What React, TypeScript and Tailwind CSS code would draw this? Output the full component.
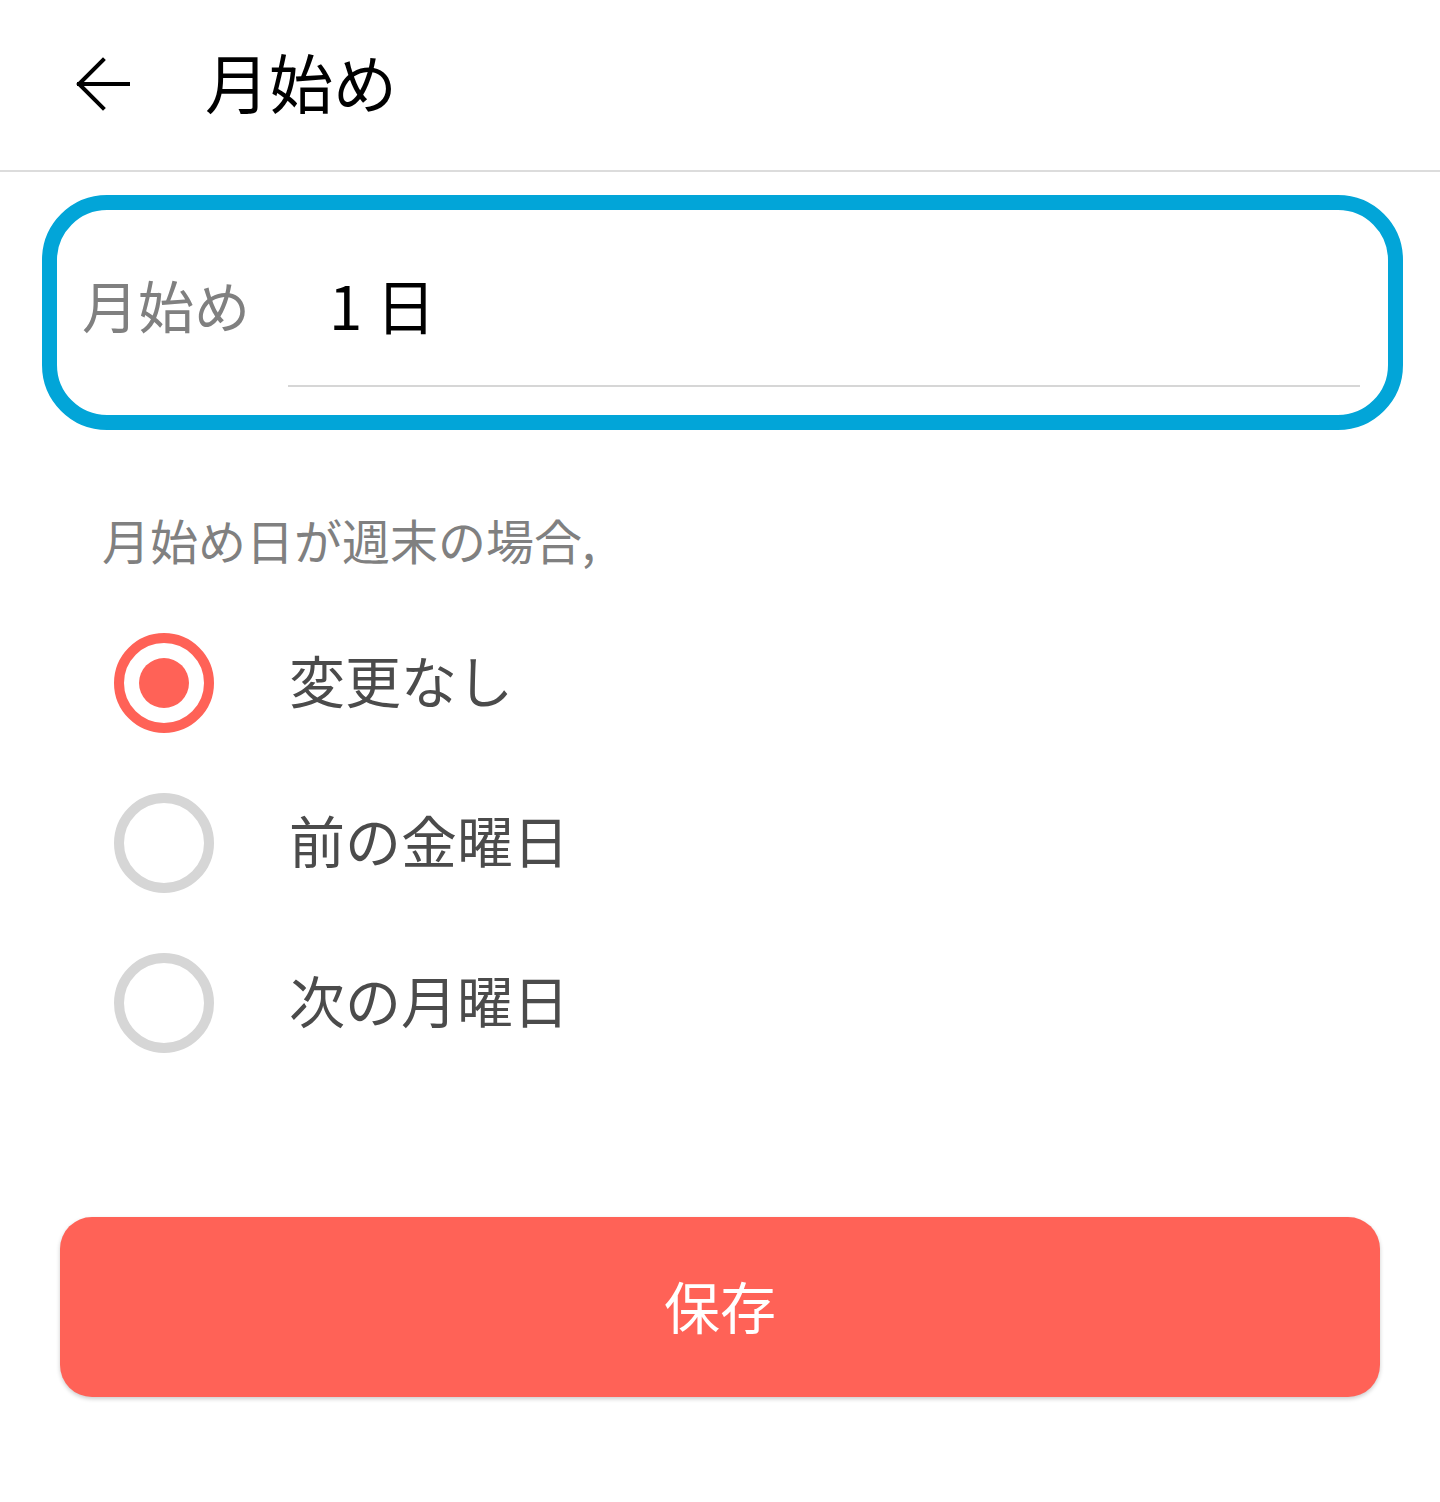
import * as React from "react";

const options = ["変更なし", "前の金曜日", "次の月曜日"];

function BackArrow() {
  return (
    <svg width="56" height="56" viewBox="0 0 56 56" fill="none" className="shrink-0">
      <path
        d="M54 27H5M29 3L5 27l24 24"
        stroke="#000"
        strokeWidth="4"
        strokeLinecap="square"
      />
    </svg>
  );
}

function Radio({ checked }: { checked: boolean }) {
  return (
    <span
      className={
        checked
          ? "flex h-[100px] w-[100px] shrink-0 items-center justify-center rounded-full border-[10px] border-[#ff6257]"
          : "flex h-[100px] w-[100px] shrink-0 items-center justify-center rounded-full border-[10px] border-[#d6d6d6]"
      }
    >
      {checked && <span className="h-[50px] w-[50px] rounded-full bg-[#ff6257]" />}
    </span>
  );
}

export default function App() {
  const [selected, setSelected] = React.useState(0);

  return (
    <div
      className="min-h-[1502px] w-full bg-white"
      style={{ fontFamily: '"Noto Sans CJK JP", "Noto Sans", sans-serif' }}
    >
      {/* header */}
      <header className="flex h-[172px] items-center border-b-2 border-[#dcdcdc] pl-[74px]">
        <BackArrow />
        <h1 className="-mt-[10px] ml-[75px] text-[64px] leading-none text-black">月始め</h1>
      </header>

      {/* input box */}
      <div className="ml-[42px] mr-[37px] mt-[23px] flex h-[235px] rounded-[65px] border-[15px] border-[#02a5d8]">
        <div className="w-[231px] shrink-0 pl-[25px] pt-[66px] text-[56px] leading-none text-[#808080]">
          月始め
        </div>
        <div className="mb-[28px] mr-[28px] flex-1 border-b-2 border-[#d6d6d6] pl-[41px] pt-[64px] text-[60px] leading-none text-black">
          1 日
        </div>
      </div>

      <p className="ml-[102px] mt-[85px] text-[48px] leading-none text-[#808080]">
        月始め日が週末の場合,
      </p>

      <ul className="mt-[40px]">
        {options.map((o, i) => (
          <li
            key={o}
            className="flex h-[160px] cursor-pointer items-center pl-[114px]"
            onClick={() => setSelected(i)}
          >
            <Radio checked={selected === i} />
            <span className="-mt-[8px] ml-[75px] text-[56px] leading-none text-[#4b4b4b]">{o}</span>
          </li>
        ))}
      </ul>

      <div className="px-[60px] pt-[134px]">
        <button className="flex h-[180px] w-full items-center justify-center rounded-[32px] bg-[#ff6257] text-[56px] leading-none text-white shadow-[0_2px_4px_rgba(0,0,0,0.2)]">
          <span className="-mt-[4px]">保存</span>
        </button>
      </div>
    </div>
  );
}
